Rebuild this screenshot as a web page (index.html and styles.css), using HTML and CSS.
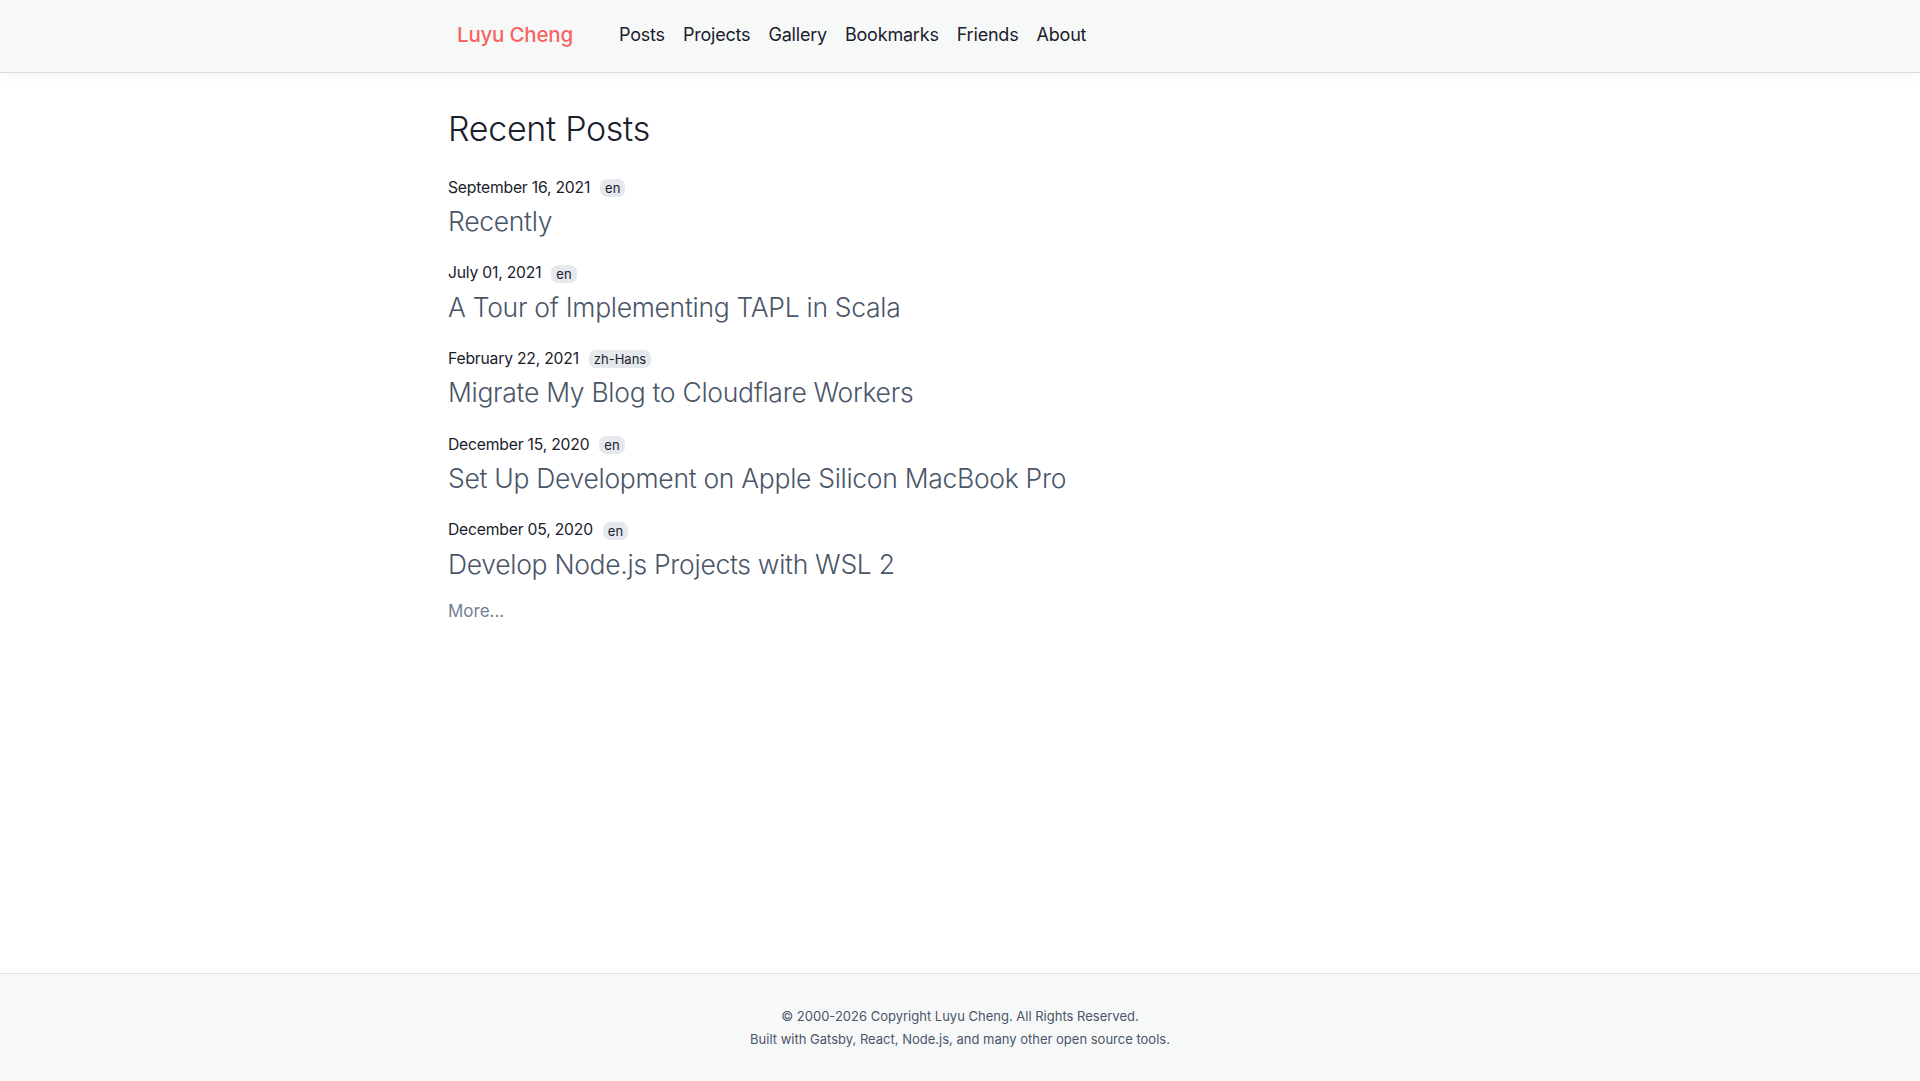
FILE: index.html
```html
<!DOCTYPE html>
<html lang="en">
<head>
<meta charset="utf-8">
<title>Luyu Cheng</title>
<link rel="stylesheet" href="styles.css">
</head>
<body>
<div class="page">
  <header class="site-header">
    <nav class="container nav">
      <a class="brand" href="#">Luyu Cheng</a>
      <ul class="nav-links">
        <li><a href="#">Posts</a></li>
        <li><a href="#">Projects</a></li>
        <li><a href="#">Gallery</a></li>
        <li><a href="#">Bookmarks</a></li>
        <li><a href="#">Friends</a></li>
        <li><a href="#">About</a></li>
      </ul>
    </nav>
  </header>
  <main class="container main">
    <h1 class="page-title">Recent Posts</h1>
    <ul class="post-list">
      <li class="post">
        <div class="meta"><span class="date">September 16, 2021</span><span class="lang">en</span></div>
        <a class="post-title" href="#">Recently</a>
      </li>
      <li class="post">
        <div class="meta"><span class="date">July 01, 2021</span><span class="lang">en</span></div>
        <a class="post-title" href="#">A Tour of Implementing TAPL in Scala</a>
      </li>
      <li class="post">
        <div class="meta"><span class="date">February 22, 2021</span><span class="lang">zh-Hans</span></div>
        <a class="post-title" href="#">Migrate My Blog to Cloudflare Workers</a>
      </li>
      <li class="post">
        <div class="meta"><span class="date">December 15, 2020</span><span class="lang">en</span></div>
        <a class="post-title" href="#">Set Up Development on Apple Silicon MacBook Pro</a>
      </li>
      <li class="post">
        <div class="meta"><span class="date">December 05, 2020</span><span class="lang">en</span></div>
        <a class="post-title" href="#">Develop Node.js Projects with WSL 2</a>
      </li>
    </ul>
    <a class="more" href="#">More...</a>
  </main>
  <footer class="site-footer">
    <p>© 2000-2026 Copyright Luyu Cheng. All Rights Reserved.</p>
    <p>Built with Gatsby, React, Node.js, and many other open source tools.</p>
  </footer>
</div>
</body>
</html>
```
FILE: styles.css
```css
* { box-sizing: border-box; }
html, body { margin: 0; padding: 0; }
body {
  font-family: Inter, "Noto Sans", "Liberation Sans", sans-serif;
  color: #1a202c;
  background: #ffffff;
}
a { text-decoration: none; color: inherit; }
ul { list-style: none; margin: 0; padding: 0; }

.page {
  min-height: 100vh;
  display: flex;
  flex-direction: column;
}

.container {
  width: 1024px;
  margin: 0 auto;
}

.site-header {
  background: #f7f9f9;
  border-bottom: 1px solid #d8dbdf;
  box-shadow: 0 4px 12px rgba(0, 0, 0, 0.03);
  height: 73px;
}

.nav {
  height: 72px;
  display: flex;
  align-items: center;
  padding-left: 9px;
  padding-bottom: 3px;
}

.brand {
  font-size: 20.5px;
  font-weight: 500;
  color: #f56565;
  margin-right: 46px;
  letter-spacing: -0.2px;
}

.nav-links {
  display: flex;
  gap: 18px;
}

.nav-links a {
  font-size: 18px;
  color: #1a202c;
  letter-spacing: -0.2px;
}

.main {
  flex: 1;
  padding-top: 34px;
}

.page-title {
  margin: 0 0 24px;
  font-size: 34px;
  line-height: 44px;
  font-weight: 300;
  color: #1a202c;
  letter-spacing: -0.3px;
}

.post-list {
  display: flex;
  flex-direction: column;
  gap: 21.7px;
}

.post {
  display: flex;
  flex-direction: column;
  gap: 4px;
}

.meta {
  display: flex;
  align-items: center;
  gap: 10px;
  height: 24px;
}

.date {
  font-size: 15.7px;
  font-weight: 400;
  color: #1a202c;
  letter-spacing: -0.2px;
}

.lang {
  font-size: 13px;
  line-height: 18px;
  padding: 0 5px;
  background: #e5e8ec;
  border-radius: 7px;
  color: #1a202c;
  margin-top: 2px;
}

.post-title {
  font-size: 26.5px;
  line-height: 36px;
  font-weight: 300;
  color: #4a5568;
  letter-spacing: -0.3px;
}

.more {
  display: inline-block;
  margin-top: 16px;
  font-size: 17px;
  line-height: 27px;
  color: #718096;
}

.site-footer {
  background: #f7f9f9;
  border-top: 1px solid #e3e6e9;
  padding: 31px 0 29px;
  text-align: center;
  color: #4a5568;
  font-size: 13px;
  line-height: 23.6px;
}

.site-footer p { margin: 0; }
```
